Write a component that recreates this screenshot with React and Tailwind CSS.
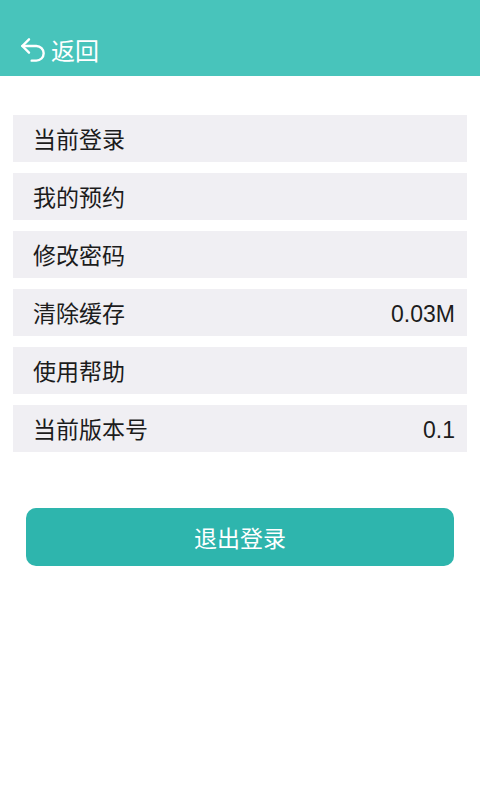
import React from 'react';
import { Undo2 } from 'lucide-react';

const rows = [
  { label: '当前登录' },
  { label: '我的预约' },
  { label: '修改密码' },
  { label: '清除缓存', value: '0.03M' },
  { label: '使用帮助' },
  { label: '当前版本号', value: '0.1' },
];

export default function App() {
  return (
    <div
      className="w-[480px] h-[800px] bg-white"
      style={{ fontFamily: '"Noto Sans CJK SC", "Noto Sans", sans-serif' }}
    >
      <div className="h-[76px] bg-[#48c4bb] flex items-center pl-[17px] pt-[24px] text-white">
        <Undo2 className="w-[32px] h-[32px]" strokeWidth={1.8} />
        <span className="text-[24px] leading-none ml-[2px]">返回</span>
      </div>

      <div className="mt-[39px] mx-[13px] flex flex-col gap-[11px]">
        {rows.map(r => (
          <div
            key={r.label}
            className="h-[47px] bg-[#f0eff3] flex items-center justify-between pl-[20px] pr-[12px] text-[23px] text-[#1c1c1c]"
          >
            <span>{r.label}</span>
            {r.value && (
              <span className="pt-[4px] font-['Liberation_Sans',sans-serif]">{r.value}</span>
            )}
          </div>
        ))}
      </div>

      <div className="mt-[56px] mx-[26px]">
        <button className="w-full h-[58px] rounded-[10px] bg-[#2eb5ad] text-white text-[23px]">
          退出登录
        </button>
      </div>
    </div>
  );
}
